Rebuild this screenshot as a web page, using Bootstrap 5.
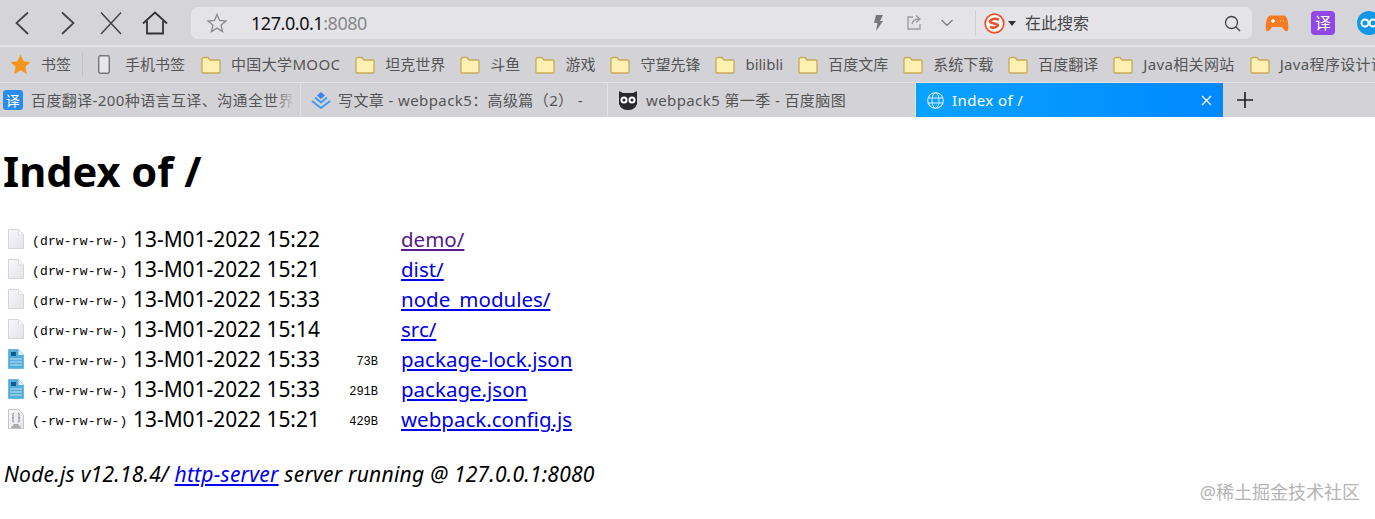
<!DOCTYPE html>
<html lang="zh-CN">
<head>
<meta charset="utf-8">
<title>Index of /</title>
<link href="https://cdn.jsdelivr.net/npm/bootstrap@5.3.0/dist/css/bootstrap.min.css" rel="stylesheet">
<style>
html,body{height:519px;overflow:hidden;background:#fff;}
body{font-family:"Noto Sans","Noto Sans CJK SC",sans-serif;color:#000;position:relative;}
svg{display:block;flex:none;}
.toolbar-row{height:47px;background:#d5d5d9;border-bottom:2px solid #e3e3e6;padding-top:7px;}
.nav-group{margin-top:-1px;margin-left:3px;}
.nav-ico{width:36px;height:36px;flex:none;}
.nav-fwd{margin-left:9px;}
.nav-stop{margin-left:8px;}
.nav-home{margin-left:5px;}
.addr-box{width:784px;height:32px;background:#e4e4e8;border-radius:7px 0 0 7px;margin-left:22px;color:#888;font-size:18px;letter-spacing:-.45px;flex:none;}
.addr-star{margin:0 22px 0 14px;}
.addr-host{color:#111;}
.addr-tools{padding-right:21px;}
.tool-share{margin:0 16px 0 21px;}
.search-box{width:277px;height:32px;background:#e4e4e8;border-radius:0 7px 7px 0;flex:none;font-size:16px;color:#444;}
.divider-v{width:1px;height:26px;background:#cfcfd3;}
.s-logo{margin-left:8px;}
.s-caret{margin:0 9px 0 3px;}
.s-glass{margin-right:11px;}
.ext-row{gap:22px;margin-left:13px;height:32px;}
.bm-row{height:36px;background:#d3d3d7;border-bottom:1px solid #e3e3e6;font-size:15px;color:#555;padding-left:10px;white-space:nowrap;overflow:hidden;}
.bm-item{display:flex;align-items:center;gap:10px;flex:none;}
.bm-item + .bm-item{margin-left:15px;}
.bm-main{width:73px;height:24px;border-right:1px solid #c4c4c8;}
.bm-item.bm-phone{margin-left:15px;gap:15px;}
.bm-item.bm-phone + .bm-item{margin-left:16px;}
.bm-wide{letter-spacing:.35px;}
.tab-row{height:34px;background:#d3d3d7;font-size:15px;letter-spacing:.4px;color:#555;white-space:nowrap;overflow:hidden;}
.tab-cell{height:34px;flex:none;display:flex;align-items:center;border-right:1px solid #e2e2e5;overflow:hidden;position:relative;padding-left:10px;gap:7px;}
.tab-w1{width:301px;padding-left:3px;gap:8px;}
.tab-w2{width:307px;}
.tab-w3{width:308px;gap:8px;}
.tab-on{width:307px;padding-left:11px;background:linear-gradient(90deg,#0aa2ff,#0088ff);color:#fff;border:0;}
.tab-label{margin-left:1px;}
.tab-x{margin-right:11px;}
.tab-new{margin:9px 0 0 14px;}
.tab-fade{position:absolute;right:0;top:0;bottom:0;width:26px;background:linear-gradient(90deg,rgba(211,211,215,0),#d3d3d7 80%);}
.page-body{padding:0 0 0 3px;}
.page-title{font-size:41.6px;font-weight:700;line-height:54px;margin:27px 0 26px;}
.file-row{height:30px;font-size:20.9px;line-height:30px;white-space:nowrap;}
.file-ico{width:16px;height:20px;margin-left:5px;margin-right:8px;align-self:center;}
.file-mode{font-family:"Liberation Mono","Noto Sans CJK SC",monospace;font-size:13px;letter-spacing:.15px;width:101px;flex:none;padding-top:3px;}
.file-date{width:207px;flex:none;}
.file-size{font-family:"Liberation Mono",monospace;font-size:12px;width:38px;text-align:right;flex:none;padding-top:3px;}
.file-name{margin-left:23px;font-size:20.5px;}
.file-name a{color:#0000ee;}
.file-name a.seen{color:#551a8b;}
.foot-line{font-style:italic;font-size:21px;letter-spacing:.25px;line-height:30px;margin-top:25px;padding-left:1px;}
.foot-line a{color:#0000ee;}
.mark-text{position:absolute;right:15px;top:480px;font-size:18px;line-height:24px;color:#b4b4b4;}
</style>
</head>
<body>
<svg width="0" height="0" class="position-absolute">
  <defs>
    <symbol id="fold" viewBox="0 0 20 18"><path d="M1 3.5Q1 1.5 3 1.5H7L9 4H18Q19 4 19 5V16Q19 17 18 17H2Q1 17 1 16Z" fill="#fdf0b0" stroke="#c8a95a" stroke-width="1.3"/></symbol>
    <linearGradient id="pg" x1="0" y1="0" x2="1" y2="1"><stop offset="0" stop-color="#f9f9fb"/><stop offset="1" stop-color="#e2e2e8"/></linearGradient>
    <symbol id="pageblank" viewBox="0 0 16 20"><path d="M.5.5H10.500L15.500 6V19.500H.5Z" fill="url(#pg)" stroke="#d4d4d9"/><path d="M10.500.5V6H15.500Z" fill="#fff" stroke="#dcdce0"/></symbol>
    <symbol id="pageblue" viewBox="0 0 16 20"><path d="M.5.5H10.500L15.500 6V19.500H.5Z" fill="#55addc" stroke="#6fb8de"/><path d="M10.500.5V6H15.500Z" fill="#e8f4fb"/><rect x="3" y="3" width="5" height="4" fill="#125d8e"/><path d="M2 10H14M2 13H14M2 16H14" stroke="#bfe0f2"/></symbol>
    <symbol id="pagejs" viewBox="0 0 16 20"><path d="M.5.5H10.500L15.500 6V19.500H.5Z" fill="url(#pg)" stroke="#c4c4ca"/><path d="M6 4Q4 4 5 7T4 9Q6 9 5 11T6 13M10 4Q12 4 11 7T12 9Q10 9 11 11T10 13" fill="none" stroke="#8a8a90"/><path d="M3 19L6 15H10L13 19Z" fill="#a8a8ae"/></symbol>
  </defs>
</svg>

<header>
  <div class="toolbar-row d-flex align-items-start">
    <div class="nav-group d-flex align-items-center">
      <span class="nav-ico"><svg width="36" height="36" viewBox="0 0 36 36"><path d="M25 6.500 13.500 17 25 28" fill="none" stroke="#444" stroke-width="1.800"/></svg></span>
      <span class="nav-ico nav-fwd"><svg width="36" height="36" viewBox="0 0 36 36"><path d="M14 6.500 25.500 17 14 28" fill="none" stroke="#444" stroke-width="1.800"/></svg></span>
      <span class="nav-ico nav-stop"><svg width="36" height="36" viewBox="0 0 36 36"><path d="M9 6.500 29 28M29 6.500 9 28" fill="none" stroke="#444" stroke-width="1.500"/></svg></span>
      <span class="nav-ico nav-home"><svg width="36" height="36" viewBox="0 0 36 36"><path d="M10 17.500 22 6.500 34 17.500M14 15V27.500H30V15" fill="none" stroke="#333" stroke-width="1.800"/></svg></span>
    </div>
    <div class="addr-box d-flex align-items-center">
      <span class="addr-star"><svg width="24" height="24" viewBox="0 0 24 24"><path d="M12 3.500 14.500 9.500 21 10 16 14.200 17.600 20.500 12 17.100 6.400 20.500 8 14.200 3 10 9.500 9.500Z" fill="none" stroke="#8a8a8e" stroke-width="1.300"/></svg></span>
      <span><span class="addr-host">127.0.0.1</span>:8080</span>
      <span class="addr-tools ms-auto d-flex align-items-center">
        <svg width="14" height="18" viewBox="0 0 14 18"><path d="M5 1H12L9 7H12L5 17 6.500 9H3Z" fill="#77777b"/></svg>
        <svg class="tool-share" width="18" height="18" viewBox="0 0 18 18"><path d="M7 3H2V15H14V10M6 10Q7 5 13 5M10 1.500 14 5 10 8.500" fill="none" stroke="#99999d" stroke-width="1.300"/></svg>
        <svg width="14" height="10" viewBox="0 0 14 10"><path d="M1.500 2 7 7.500 12.500 2" fill="none" stroke="#77777b" stroke-width="1.200"/></svg>
      </span>
    </div>
    <div class="search-box d-flex align-items-center">
      <span class="divider-v"></span>
      <svg class="s-logo" width="21" height="21" viewBox="0 0 21 21"><circle cx="10.500" cy="10.500" r="9.300" fill="#fff" stroke="#f0512a" stroke-width="1.800"/><path d="M15 6.800Q10 4.500 7 7T10 10.500 13 13.500 6 14" fill="none" stroke="#f0512a" stroke-width="2.600"/></svg>
      <svg class="s-caret" width="8" height="5" viewBox="0 0 8 5"><path d="M0 0H8L4 5Z" fill="#333"/></svg>
      <span>在此搜索</span>
      <svg class="s-glass ms-auto" width="17" height="17" viewBox="0 0 17 17"><circle cx="7.500" cy="7.500" r="6" fill="none" stroke="#444" stroke-width="1.300"/><path d="M12 12 16 16" stroke="#444" stroke-width="1.500"/></svg>
    </div>
    <div class="ext-row d-flex align-items-center">
      <svg width="24" height="17" viewBox="0 0 24 17"><path d="M5 .5H19Q22 .5 23 8T22 16Q20 17 17 12H7Q4 17 2 16T1 8 5 .5Z" fill="#f57a22"/><path d="M6 6H10M8 4V8M15 6H15.500M18 6H18.500" stroke="#fff" stroke-width="1.500"/></svg>
      <svg width="24" height="24" viewBox="0 0 24 24"><rect width="24" height="24" rx="4" fill="#9146e6"/><text x="12" y="18" text-anchor="middle" font-size="16" fill="#fff" font-family="Noto Sans CJK SC">译</text></svg>
      <svg width="24" height="24" viewBox="0 0 24 24"><circle cx="12" cy="12" r="12" fill="#1296e8"/><circle cx="8" cy="12" r="3.500" fill="none" stroke="#fff" stroke-width="2"/><circle cx="16" cy="12" r="3.500" fill="none" stroke="#fff" stroke-width="2"/></svg>
    </div>
  </div>

  <nav class="bm-row d-flex align-items-center">
    <span class="bm-item bm-main"><svg width="21" height="21" viewBox="0 0 21 21"><path d="M10.500 .5 13.600 7.200 20.500 8 15.400 12.800 16.800 20 10.500 16.300 4.200 20 5.600 12.800 .5 8 7.400 7.200Z" fill="#f7941d"/></svg><span>书签</span></span>
    <span class="bm-item bm-phone"><svg width="12" height="19" viewBox="0 0 12 19"><rect x=".7" y=".7" width="10.600" height="17.600" rx="1.500" fill="#e8e8ea" stroke="#77777b" stroke-width="1.400"/></svg><span>手机书签</span></span>
    <span class="bm-item"><svg width="20" height="18"><use href="#fold"/></svg><span class="bm-wide">中国大学MOOC</span></span>
    <span class="bm-item"><svg width="20" height="18"><use href="#fold"/></svg><span>坦克世界</span></span>
    <span class="bm-item"><svg width="20" height="18"><use href="#fold"/></svg><span>斗鱼</span></span>
    <span class="bm-item"><svg width="20" height="18"><use href="#fold"/></svg><span>游戏</span></span>
    <span class="bm-item"><svg width="20" height="18"><use href="#fold"/></svg><span>守望先锋</span></span>
    <span class="bm-item"><svg width="20" height="18"><use href="#fold"/></svg><span>bilibli</span></span>
    <span class="bm-item"><svg width="20" height="18"><use href="#fold"/></svg><span>百度文库</span></span>
    <span class="bm-item"><svg width="20" height="18"><use href="#fold"/></svg><span>系统下载</span></span>
    <span class="bm-item"><svg width="20" height="18"><use href="#fold"/></svg><span>百度翻译</span></span>
    <span class="bm-item"><svg width="20" height="18"><use href="#fold"/></svg><span class="bm-wide">Java相关网站</span></span>
    <span class="bm-item"><svg width="20" height="18"><use href="#fold"/></svg><span class="bm-wide">Java程序设计语言</span></span>
  </nav>

  <div class="tab-row d-flex">
    <div class="tab-cell tab-w1"><svg width="20" height="20" viewBox="0 0 20 20"><rect width="20" height="20" rx="3" fill="#2a8cf0"/><text x="10" y="15.500" text-anchor="middle" font-size="14" fill="#fff" font-family="Noto Sans CJK SC">译</text></svg><span>百度翻译-200种语言互译、沟通全世界</span><i class="tab-fade"></i></div>
    <div class="tab-cell tab-w2"><svg width="20" height="18" viewBox="0 0 20 18"><path d="M10 1 14 4.500 10 8 6 4.500Z" fill="#3f82f0"/><path d="M4 6.500 10 11.500 16 6.500M1 10 10 17 19 10" fill="none" stroke="#3f9cf0" stroke-width="2"/></svg><span>写文章 - webpack5：高级篇（2） -</span><i class="tab-fade"></i></div>
    <div class="tab-cell tab-w3"><svg width="20" height="20" viewBox="0 0 20 20"><path d="M1 1 5 3H15L19 1V14Q17 20 10 20T1 14Z" fill="#2a2a2e"/><circle cx="6" cy="10" r="3.500" fill="#fff"/><circle cx="14" cy="10" r="3.500" fill="#fff"/><circle cx="6" cy="10" r="1.500" fill="#222"/><circle cx="14" cy="10" r="1.500" fill="#222"/></svg><span>webpack5 第一季 - 百度脑图</span></div>
    <div class="tab-cell tab-on"><svg width="17" height="17" viewBox="0 0 17 17"><circle cx="8.500" cy="8.500" r="7.800" fill="none" stroke="#d8efff" stroke-width="1.100"/><ellipse cx="8.500" cy="8.500" rx="3.500" ry="7.800" fill="none" stroke="#d8efff"/><path d="M1 6H16M1 11H16" stroke="#d8efff"/></svg><span class="tab-label">Index of /</span><svg class="tab-x ms-auto" width="11" height="11" viewBox="0 0 11 11"><path d="M1 1 10 10M10 1 1 10" stroke="#fff" stroke-width="1.300"/></svg></div>
    <svg class="tab-new" width="16" height="16" viewBox="0 0 16 16"><path d="M0 8H16M8 0V16" stroke="#222" stroke-width="1.700"/></svg>
  </div>
</header>

<main class="page-body">
  <h1 class="page-title">Index of /</h1>
  <div class="file-row d-flex"><svg class="file-ico"><use href="#pageblank"/></svg><code class="file-mode text-reset">(drw-rw-rw-)</code><span class="file-date">13-M01-2022 15:22</span><span class="file-size"></span><span class="file-name"><a class="seen" href="#">demo/</a></span></div>
  <div class="file-row d-flex"><svg class="file-ico"><use href="#pageblank"/></svg><code class="file-mode text-reset">(drw-rw-rw-)</code><span class="file-date">13-M01-2022 15:21</span><span class="file-size"></span><span class="file-name"><a href="#">dist/</a></span></div>
  <div class="file-row d-flex"><svg class="file-ico"><use href="#pageblank"/></svg><code class="file-mode text-reset">(drw-rw-rw-)</code><span class="file-date">13-M01-2022 15:33</span><span class="file-size"></span><span class="file-name"><a href="#">node_modules/</a></span></div>
  <div class="file-row d-flex"><svg class="file-ico"><use href="#pageblank"/></svg><code class="file-mode text-reset">(drw-rw-rw-)</code><span class="file-date">13-M01-2022 15:14</span><span class="file-size"></span><span class="file-name"><a href="#">src/</a></span></div>
  <div class="file-row d-flex"><svg class="file-ico"><use href="#pageblue"/></svg><code class="file-mode text-reset">(-rw-rw-rw-)</code><span class="file-date">13-M01-2022 15:33</span><span class="file-size">73B</span><span class="file-name"><a href="#">package-lock.json</a></span></div>
  <div class="file-row d-flex"><svg class="file-ico"><use href="#pageblue"/></svg><code class="file-mode text-reset">(-rw-rw-rw-)</code><span class="file-date">13-M01-2022 15:33</span><span class="file-size">291B</span><span class="file-name"><a href="#">package.json</a></span></div>
  <div class="file-row d-flex"><svg class="file-ico"><use href="#pagejs"/></svg><code class="file-mode text-reset">(-rw-rw-rw-)</code><span class="file-date">13-M01-2022 15:21</span><span class="file-size">429B</span><span class="file-name"><a href="#">webpack.config.js</a></span></div>
  <address class="foot-line mb-0">Node.js v12.18.4/ <a href="#">http-server</a> server running @ 127.0.0.1:8080</address>
</main>
<div class="mark-text">@稀土掘金技术社区</div>
<script src="https://cdn.jsdelivr.net/npm/bootstrap@5.3.0/dist/js/bootstrap.bundle.min.js"></script>
</body>
</html>
